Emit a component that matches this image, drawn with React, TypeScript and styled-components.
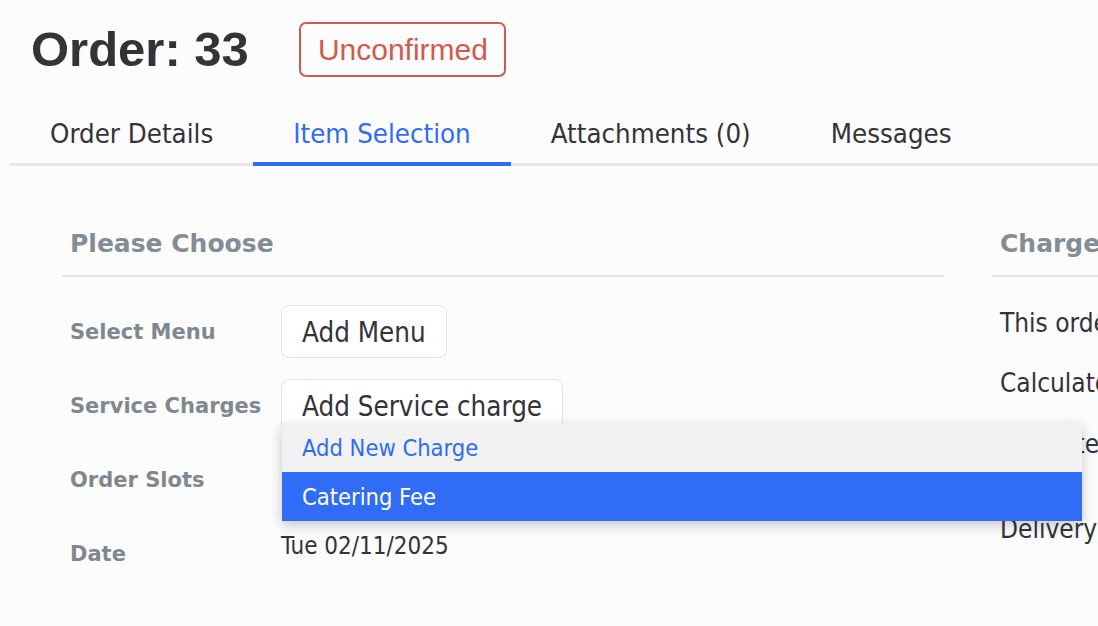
import React from "react";
import styled, { createGlobalStyle } from "styled-components";

const GlobalStyle = createGlobalStyle`
  html, body {
    margin: 0;
    padding: 0;
    background: #fcfcfd;
    overflow: hidden;
  }
  body {
    font-family: "DejaVu Sans Condensed", "DejaVu Sans", sans-serif;
    font-stretch: semi-condensed;
    color: #333338;
  }
`;

const Page = styled.div`
  width: 1098px;
  height: 626px;
  overflow: hidden;
`;

const Header = styled.header`
  display: flex;
  align-items: center;
  gap: 50px;
  padding: 22px 0 0 31px;
`;

const Title = styled.h1`
  margin: 0;
  font-family: "Liberation Sans", Arial, sans-serif;
  font-stretch: normal;
  font-size: 49px;
  font-weight: 700;
  line-height: 55px;
  color: #333338;
`;

const StatusBadge = styled.span`
  box-sizing: border-box;
  height: 55px;
  display: inline-flex;
  align-items: center;
  padding: 0 16px 0 17px;
  border: 2px solid #d25a4b;
  border-radius: 7px;
  color: #d25a4b;
  font-family: "Liberation Sans", Arial, sans-serif;
  font-stretch: normal;
  font-size: 30px;
`;

const Tabs = styled.nav`
  display: flex;
  margin: 42px 0 0 10px;
  border-bottom: 3px solid #e8e8ea;
`;

const Tab = styled.div<{ $active?: boolean }>`
  padding: 0 40px 13px;
  margin-bottom: -3px;
  border-bottom: 4px solid ${(p) => (p.$active ? "#2f6cf6" : "transparent")};
  font-size: 27.4px;
  line-height: 30px;
  color: ${(p) => (p.$active ? "#2f6cf6" : "#333338")};
  white-space: nowrap;
  cursor: pointer;
`;

const Main = styled.main`
  display: grid;
  grid-template-columns: 882px 1fr;
  column-gap: 48px;
  padding: 63px 0 0 62px;
`;

const Column = styled.section`
  min-width: 0;
`;

const SectionTitle = styled.h2`
  margin: 0;
  padding: 0 8px 16px;
  border-bottom: 2px solid #e6e6e8;
  font-family: "DejaVu Sans", sans-serif;
  font-stretch: normal;
  font-size: 25px;
  font-weight: 700;
  line-height: 30px;
  color: #848c94;
  white-space: nowrap;
`;

const FieldList = styled.div`
  display: flex;
  flex-direction: column;
  gap: 21px;
  margin-top: 28px;
  padding-left: 8px;
`;

const Field = styled.div`
  display: flex;
  align-items: center;
  min-height: 53px;
`;

const FieldLabel = styled.div`
  width: 211px;
  flex-shrink: 0;
  font-family: "DejaVu Sans", sans-serif;
  font-stretch: normal;
  font-size: 21px;
  font-weight: 700;
  color: #80888f;
`;

const Control = styled.div`
  position: relative;
`;

const Button = styled.button`
  box-sizing: border-box;
  height: 53px;
  padding: 0 20px;
  border: 1px solid #e3e3e6;
  border-radius: 8px;
  background: #fff;
  font-family: inherit;
  font-stretch: inherit;
  font-size: 27.5px;
  color: #333338;
  white-space: nowrap;
  cursor: pointer;
`;

const Dropdown = styled.ul`
  position: absolute;
  top: 44px;
  left: 1px;
  z-index: 10;
  width: 800px;
  margin: 0;
  padding: 0;
  list-style: none;
  background: #f2f2f2;
  box-shadow: 0 4px 12px rgba(0, 0, 0, 0.22);
`;

const DropdownItem = styled.li<{ $highlighted?: boolean }>`
  height: 49px;
  display: flex;
  align-items: center;
  padding: 0 20px;
  font-size: 23.5px;
  background: ${(p) => (p.$highlighted ? "#306cf5" : "#f2f2f2")};
  color: ${(p) => (p.$highlighted ? "#ffffff" : "#2f6cf6")};
  cursor: pointer;
`;

const DateValue = styled.div`
  align-self: flex-start;
  margin-top: 4px;
  font-size: 24px;
  line-height: 30px;
`;

const ChargeLine = styled.p<{ $gap: number }>`
  margin: ${(p) => p.$gap}px 0 0;
  padding-left: 8px;
  font-size: 26px;
  line-height: 30px;
  white-space: nowrap;
`;

const tabs = ["Order Details", "Item Selection", "Attachments (0)", "Messages"];

export default function App() {
  return (
    <Page>
      <GlobalStyle />
      <Header>
        <Title>Order: 33</Title>
        <StatusBadge>Unconfirmed</StatusBadge>
      </Header>
      <Tabs>
        {tabs.map((t) => (
          <Tab key={t} $active={t === "Item Selection"}>
            {t}
          </Tab>
        ))}
      </Tabs>
      <Main>
        <Column>
          <SectionTitle>Please Choose</SectionTitle>
          <FieldList>
            <Field>
              <FieldLabel>Select Menu</FieldLabel>
              <Control>
                <Button>Add Menu</Button>
              </Control>
            </Field>
            <Field>
              <FieldLabel>Service Charges</FieldLabel>
              <Control>
                <Button>Add Service charge</Button>
                <Dropdown>
                  <DropdownItem>Add New Charge</DropdownItem>
                  <DropdownItem $highlighted>Catering Fee</DropdownItem>
                </Dropdown>
              </Control>
            </Field>
            <Field>
              <FieldLabel>Order Slots</FieldLabel>
            </Field>
            <Field>
              <FieldLabel>Date</FieldLabel>
              <DateValue>Tue 02/11/2025</DateValue>
            </Field>
          </FieldList>
        </Column>
        <Column>
          <SectionTitle>Charges</SectionTitle>
          <ChargeLine $gap={31}>This order has no service charges.</ChargeLine>
          <ChargeLine $gap={30}>Calculated at checkout</ChargeLine>
          <ChargeLine $gap={31}>Tax Rate: 0%</ChargeLine>
          <ChargeLine $gap={55}>Delivery Time: 11:30 AM</ChargeLine>
        </Column>
      </Main>
    </Page>
  );
}
